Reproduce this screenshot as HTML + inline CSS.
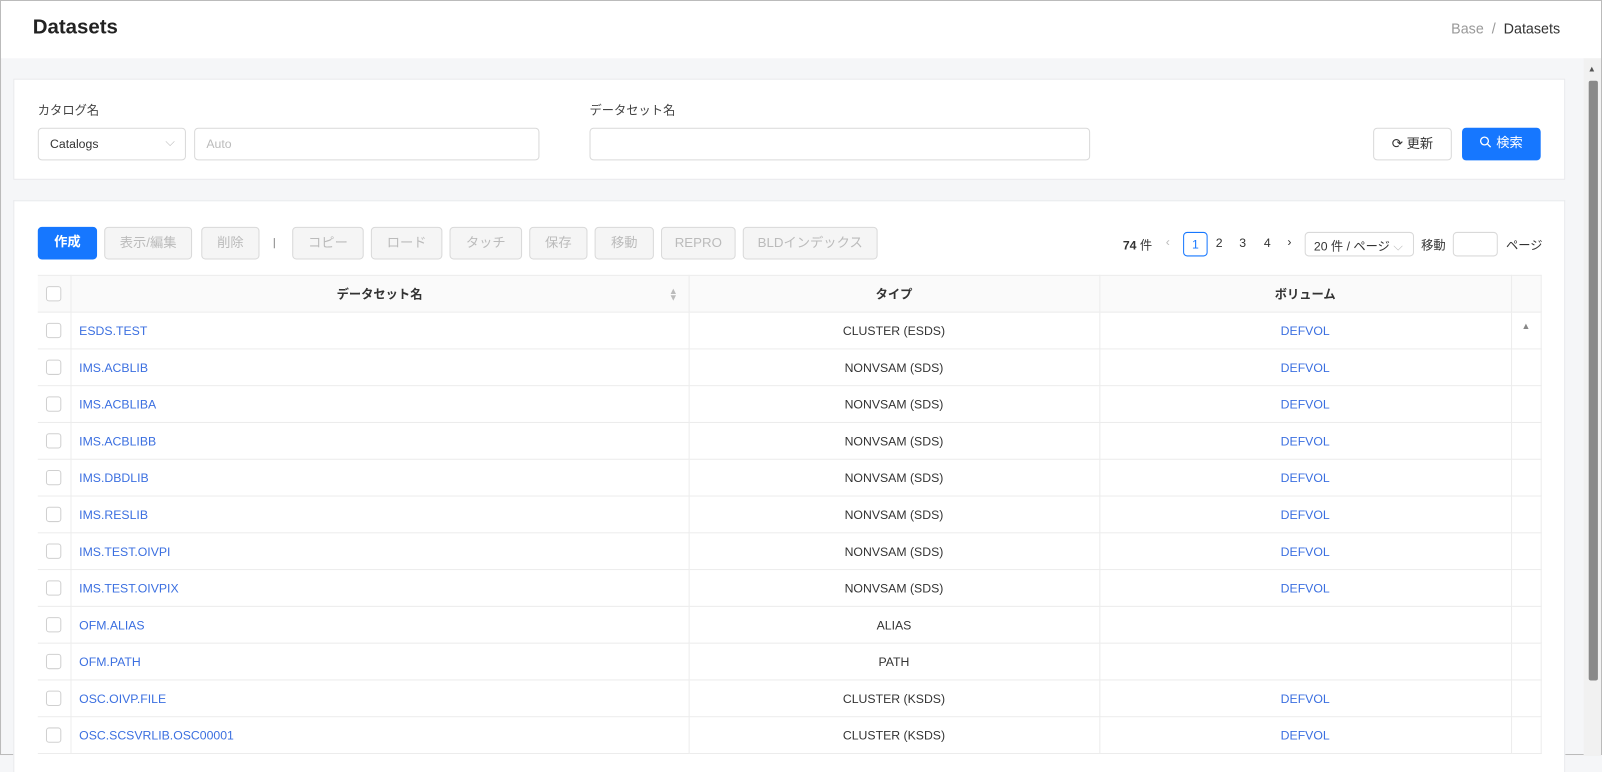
<!DOCTYPE html>
<html><head><meta charset="utf-8"><style>
*{box-sizing:border-box;margin:0;padding:0}
html,body{width:1602px;height:755px;overflow:hidden;background:#f5f6f8}
#w{position:absolute;left:0;top:0;width:1568px;height:739px;transform:scale(1.02168);transform-origin:0 0;font-family:"Liberation Sans","Noto Sans CJK JP",sans-serif;font-size:12px;color:#333;background:#f5f6f8;border:1px solid #bbb}
.hdr{position:absolute;left:0;top:0;width:1566px;height:56px;background:#fff}
.hdr h1{position:absolute;left:31px;top:15px;font-size:20px;font-weight:bold;color:#222}
.bc{position:absolute;right:40px;top:19px;font-size:14px;color:#999}
.bc b{font-weight:normal;color:#333}
.card{position:absolute;left:12px;background:#fff;border:1px solid #e8e9ec}
.lbl{position:absolute;font-size:12px;color:#444}
.inp{position:absolute;height:32px;border:1px solid #d9d9d9;border-radius:4px;background:#fff;font-size:12px;padding:8px 11px}
.btn{position:absolute;height:32px;border-radius:4px;font-size:13px;text-align:center;line-height:30px}
.dis{border:1px solid #d9d9d9;background:#f5f5f5;color:#bbb}
.pg{position:absolute;font-size:12px;color:#333}
table{position:absolute;left:36px;top:268px;width:1471px;border-collapse:collapse;table-layout:fixed}
td,th{height:36px;border-bottom:1px solid #ececec;border-right:1px solid #ececec;font-size:12px;text-align:center}
th{background:#fafafa;font-weight:bold;color:#333;border-top:1px solid #ececec}
td.n{text-align:left;padding-left:8px;color:#3b6fe0}
td.v{color:#3b6fe0}
.cb{display:inline-block;width:15px;height:15px;border:1px solid #d0d0d0;border-radius:3px;background:#fff;vertical-align:middle}
</style></head><body><div id="w">
<div class="hdr"><h1>Datasets</h1><div class="bc">Base &nbsp;/&nbsp; <b>Datasets</b></div></div>
<div class="card" style="top:76px;width:1519px;height:99px"></div>
<div class="lbl" style="left:36px;top:98px">カタログ名</div>
<div class="inp" style="left:36px;top:124px;width:145px;color:#333">Catalogs<span style="position:absolute;right:10px;top:6px;color:#bbb">⌵</span></div>
<div class="inp" style="left:189px;top:124px;width:338px;color:#bbb">Auto</div>
<div class="lbl" style="left:576px;top:98px">データセット名</div>
<div class="inp" style="left:576px;top:124px;width:490px"></div>
<div class="btn" style="left:1343px;top:124px;width:77px;border:1px solid #d9d9d9;background:#fff;color:#333">⟳ 更新</div>
<div class="btn" style="left:1430px;top:124px;width:77px;background:#1677ff;color:#fff">
<svg width="12" height="12" viewBox="0 0 12 12" style="vertical-align:-1px;margin-right:4px"><circle cx="5" cy="5" r="3.8" fill="none" stroke="#fff" stroke-width="1.3"/><path d="M8 8l3 3" stroke="#fff" stroke-width="1.3"/></svg>検索</div>
<div class="card" style="top:195px;width:1519px;height:560px;border-bottom:none"></div>
<div class="btn" style="left:36px;top:221px;width:58px;background:#1677ff;color:#fff;font-weight:bold">作成</div>
<div class="btn dis" style="left:101px;top:221px;width:86px">表示/編集</div>
<div class="btn dis" style="left:196px;top:221px;width:57px">削除</div>
<div style="position:absolute;left:267px;top:232px;width:1px;height:10px;background:#888"></div>
<div class="btn dis" style="left:285px;top:221px;width:70px">コピー</div>
<div class="btn dis" style="left:362px;top:221px;width:70px">ロード</div>
<div class="btn dis" style="left:439px;top:221px;width:71px">タッチ</div>
<div class="btn dis" style="left:517px;top:221px;width:57px">保存</div>
<div class="btn dis" style="left:581px;top:221px;width:58px">移動</div>
<div class="btn dis" style="left:646px;top:221px;width:73px">REPRO</div>
<div class="btn dis" style="left:726px;top:221px;width:132px">BLDインデックス</div>
<div class="pg" style="left:1098px;top:230px"><b>74</b> 件</div>
<div class="pg" style="left:1140px;top:229px;color:#bbb">‹</div>
<div style="position:absolute;left:1157px;top:226px;width:24px;height:24px;border:1px solid #1677ff;border-radius:4px;color:#1677ff;text-align:center;line-height:22px">1</div>
<div class="pg" style="left:1189px;top:230px">2</div>
<div class="pg" style="left:1212px;top:230px">3</div>
<div class="pg" style="left:1236px;top:230px">4</div>
<div class="pg" style="left:1259px;top:229px">›</div>
<div style="position:absolute;left:1276px;top:226px;width:107px;height:24px;border:1px solid #d9d9d9;border-radius:4px;padding:4px 8px">20 件 / ページ <span style="color:#bbb">⌵</span></div>
<div class="pg" style="left:1390px;top:230px">移動</div>
<div style="position:absolute;left:1421px;top:226px;width:44px;height:24px;border:1px solid #d9d9d9;border-radius:4px"></div>
<div class="pg" style="left:1473px;top:230px">ページ</div>
<table>
<colgroup><col style="width:32px"><col style="width:605px"><col style="width:402px"><col style="width:403px"><col style="width:29px"></colgroup>
<tr><th><span class="cb"></span></th><th style="position:relative">データセット名<span style="position:absolute;right:10px;color:#bbb;font-size:9px;line-height:6px;top:12px">▲<br>▼</span></th><th>タイプ</th><th>ボリューム</th><th></th></tr>
<tr><td><span class="cb"></span></td><td class="n">ESDS.TEST</td><td>CLUSTER (ESDS)</td><td class="v">DEFVOL</td><td style="vertical-align:top;color:#888;font-size:9px;padding-top:8px">▲</td></tr>
<tr><td><span class="cb"></span></td><td class="n">IMS.ACBLIB</td><td>NONVSAM (SDS)</td><td class="v">DEFVOL</td><td></td></tr>
<tr><td><span class="cb"></span></td><td class="n">IMS.ACBLIBA</td><td>NONVSAM (SDS)</td><td class="v">DEFVOL</td><td></td></tr>
<tr><td><span class="cb"></span></td><td class="n">IMS.ACBLIBB</td><td>NONVSAM (SDS)</td><td class="v">DEFVOL</td><td></td></tr>
<tr><td><span class="cb"></span></td><td class="n">IMS.DBDLIB</td><td>NONVSAM (SDS)</td><td class="v">DEFVOL</td><td></td></tr>
<tr><td><span class="cb"></span></td><td class="n">IMS.RESLIB</td><td>NONVSAM (SDS)</td><td class="v">DEFVOL</td><td></td></tr>
<tr><td><span class="cb"></span></td><td class="n">IMS.TEST.OIVPI</td><td>NONVSAM (SDS)</td><td class="v">DEFVOL</td><td></td></tr>
<tr><td><span class="cb"></span></td><td class="n">IMS.TEST.OIVPIX</td><td>NONVSAM (SDS)</td><td class="v">DEFVOL</td><td></td></tr>
<tr><td><span class="cb"></span></td><td class="n">OFM.ALIAS</td><td>ALIAS</td><td class="v"></td><td></td></tr>
<tr><td><span class="cb"></span></td><td class="n">OFM.PATH</td><td>PATH</td><td class="v"></td><td></td></tr>
<tr><td><span class="cb"></span></td><td class="n">OSC.OIVP.FILE</td><td>CLUSTER (KSDS)</td><td class="v">DEFVOL</td><td></td></tr>
<tr><td><span class="cb"></span></td><td class="n">OSC.SCSVRLIB.OSC00001</td><td>CLUSTER (KSDS)</td><td class="v">DEFVOL</td><td></td></tr>
</table>
<div style="position:absolute;left:1549px;top:56px;width:17px;height:683px;background:#f1f1f1"></div>
<div style="position:absolute;left:1553px;top:62px;font-size:8px;color:#555">▲</div>
<div style="position:absolute;left:1554px;top:78px;width:9px;height:587px;background:#8a8a8a;border-radius:2px"></div>
</div></body></html>
